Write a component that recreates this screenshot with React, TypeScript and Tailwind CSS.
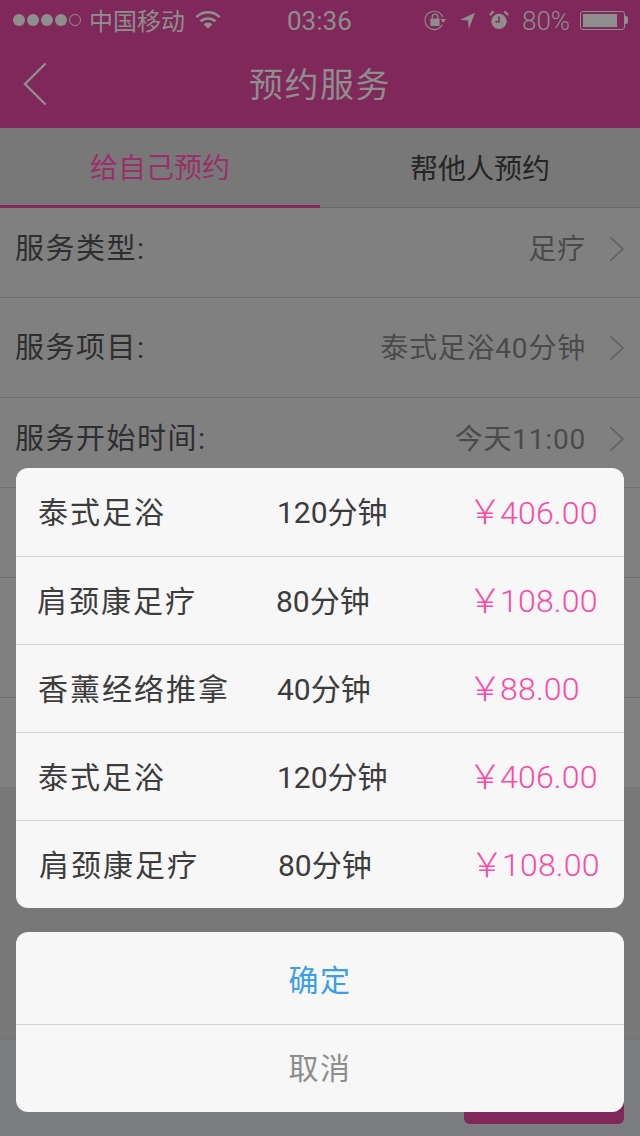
import React from "react";

const FONT = "font-['Roboto','Noto_Sans_CJK_SC',sans-serif]";

function Chevron() {
  return (
    <svg width="16" height="26" viewBox="0 0 16 26" fill="none" className="shrink-0">
      <path d="M1.5 1.5 L14 13 L1.5 24.5" stroke="#5f5f5f" strokeWidth="1.6" />
    </svg>
  );
}

function StatusBar() {
  return (
    <div className="h-10 flex items-center pl-[13px] pr-[12px] text-[#8e8e8e]">
      <div className="flex items-center gap-[2px]">
        {[0, 1, 2, 3].map((i) => (
          <span key={i} className="w-[12px] h-[12px] rounded-full bg-[#8e8e8e]" />
        ))}
        <span className="w-[12px] h-[12px] rounded-full border border-[#8e8e8e]" />
      </div>
      <span className="ml-[8px] pt-[4px] text-[24px] leading-none">中国移动</span>
      <svg width="26" height="19" viewBox="0 0 28 20" className="ml-[10px] -mt-[1px]" fill="none">
        <path d="M1.5 7.5 C8.5 0.5 19.5 0.5 26.5 7.5" stroke="#8e8e8e" strokeWidth="2.8" />
        <path d="M6 12 C10.5 7.8 17.5 7.8 22 12" stroke="#8e8e8e" strokeWidth="2.8" />
        <path d="M9.5 15 C12 12.6 16 12.6 18.5 15 L14 20 Z" fill="#8e8e8e" />
      </svg>
      <span className="ml-[66px] w-[64px] pt-[2px] text-[26px] leading-none text-center">03:36</span>
      <div className="flex-1" />
      <svg width="24" height="22" viewBox="0 0 24 24" fill="none">
        <path d="M20.5 9 A10 10 0 1 0 20 17" stroke="#8e8e8e" strokeWidth="1.2" />
        <path d="M18 11 L24 11 L21 15 Z" fill="#8e8e8e" />
        <rect x="7" y="10.5" width="10" height="8" fill="#8e8e8e" />
        <path d="M9 10.5 V8.5 A3 3 0 0 1 15 8.5 V10.5" stroke="#8e8e8e" strokeWidth="1.4" />
      </svg>
      <svg width="18" height="18" viewBox="0 0 19 22" className="ml-[12px] mt-[1px]">
        <path d="M0 9.5 L18 1 L10.5 21 L9.5 10.5 Z" fill="#8e8e8e" />
      </svg>
      <svg width="20" height="20" viewBox="0 0 22 22" className="ml-[12px]" fill="none">
        <circle cx="11" cy="12.5" r="8.5" fill="#8e8e8e" />
        <path d="M11 7 V13 H7" stroke="#80285a" strokeWidth="1.6" />
        <path d="M1 5.5 L5 1.5 M21 5.5 L17 1.5" stroke="#8e8e8e" strokeWidth="2.4" />
      </svg>
      <span className="ml-[13px] w-[49px] pt-[2px] text-[26px] font-light leading-none">80%</span>
      <div className="ml-[9px] flex items-center">
        <div className="w-[45px] h-[19px] border border-[#8e8e8e] rounded-[3px] p-[2px] pr-[7px]">
          <div className="h-full bg-[#8e8e8e]" />
        </div>
        <div className="w-[3px] h-[8px] bg-[#8e8e8e] rounded-r-[2px]" />
      </div>
    </div>
  );
}

function Row({ label, value, cls }: { label: string; value: string; cls: string }) {
  return (
    <div className={`flex items-center justify-between pl-[15px] pr-[15px] border-b border-[#6f6f6f] ${cls}`}>
      <span className="pt-[2px] text-[29px] tracking-[1.5px] leading-none text-[#2e2e2e]">{label}</span>
      <span className="flex items-center gap-[23px]">
        <span className="pt-[2px] text-[28px] tracking-[0.8px] leading-none text-[#4a4a4a]">{value}</span>
        <Chevron />
      </span>
    </div>
  );
}

const services = [
  { name: "泰式足浴", min: "120分钟", price: "406.00", row: "pl-[22px]", d: "w-[191px]" },
  { name: "肩颈康足疗", min: "80分钟", price: "108.00", row: "pl-[21px]", d: "w-[192px]" },
  { name: "香薰经络推拿", min: "40分钟", price: "88.00", row: "pl-[22px]", d: "w-[191px]" },
  { name: "泰式足浴", min: "120分钟", price: "406.00", row: "pl-[22px]", d: "w-[191px]" },
  { name: "肩颈康足疗", min: "80分钟", price: "108.00", row: "pl-[23px]", d: "w-[192px]" },
];

export default function App() {
  return (
    <div className={`relative w-[640px] h-[1136px] overflow-hidden bg-[#808080] ${FONT}`}>
      <div className="flex flex-col h-full">
        <header className="bg-[#80285a] h-[128px] shrink-0">
          <StatusBar />
          <div className="h-[88px] flex items-center">
            <svg width="24" height="44" viewBox="0 0 24 44" fill="none" className="ml-[23px] -mt-[1px]">
              <path d="M22.5 1.5 L2 22 L22.5 42.5" stroke="#8e8e8e" strokeWidth="2.4" />
            </svg>
            <h1 className="flex-1 text-center text-[34px] tracking-[1.5px] leading-none text-[#8e8e8e] -ml-[47px] pt-[1px]">预约服务</h1>
          </div>
        </header>
        <div className="flex h-[80px] bg-[#787878] border-b border-[#6a6a6a] shrink-0">
          <div className="flex-1 flex items-center justify-center pt-[4px] text-[28px] leading-none text-[#9b2f6a] border-b-[3px] border-[#832a5c] -mb-[1px]">
            给自己预约
          </div>
          <div className="flex-1 flex items-center justify-center pt-[4px] text-[28px] leading-none text-[#252525]">
            帮他人预约
          </div>
        </div>
        <Row label="服务类型:" value="足疗" cls="h-[90px] pb-[8px]" />
        <Row label="服务项目:" value="泰式足浴40分钟" cls="h-[100px]" />
        <Row label="服务开始时间:" value="今天11:00" cls="h-[90px] pb-[8px]" />
        <div className="h-[90px] border-b border-[#6f6f6f]" />
        <div className="h-[120px] border-b border-[#6f6f6f]" />
        <div className="h-[89px]" />
        <div className="h-[252px] bg-[#787878]" />
        <div className="flex-1 bg-[#7b7c7e] border-t border-[#747474] flex justify-end pr-[16px] items-start">
          <div className="mt-[40px] w-[160px] h-[44px] bg-[#80285a] rounded-[6px]" />
        </div>
      </div>

      <div className="absolute left-[16px] right-[16px] bottom-[24px] flex flex-col gap-[24px]">
        <div className="bg-[#f7f7f7] rounded-[12px] overflow-hidden">
          {services.map((s, i) => (
            <div
              key={i}
              className={`h-[88px] flex items-center border-t first:border-t-0 border-[#d2d2d6] text-[#3c3c3c] ${s.row}`}
            >
              <span className="w-[239px] shrink-0 pt-[2px] text-[30px] tracking-[2px] leading-none">{s.name}</span>
              <span className={`${s.d} shrink-0 pt-[2px] text-[30px] leading-none`}>{s.min}</span>
              <span className="flex items-center text-[#fb4aa3] leading-none font-light">
                <span className="w-[32px] shrink-0 text-[34px]">￥</span>
                <span className="pt-[1px] text-[32px] tracking-[0.2px]">{s.price}</span>
              </span>
            </div>
          ))}
        </div>
        <div className="bg-[#f7f7f7] rounded-[12px] overflow-hidden">
          <div className="h-[93px] flex items-center justify-center pt-[5px] text-[30px] tracking-[1.5px] leading-none text-[#3b9ee8] border-b border-[#d2d2d6]">确定</div>
          <div className="h-[87px] flex items-center justify-center text-[30px] tracking-[1.5px] leading-none text-[#8e8e8e]">取消</div>
        </div>
      </div>
    </div>
  );
}
